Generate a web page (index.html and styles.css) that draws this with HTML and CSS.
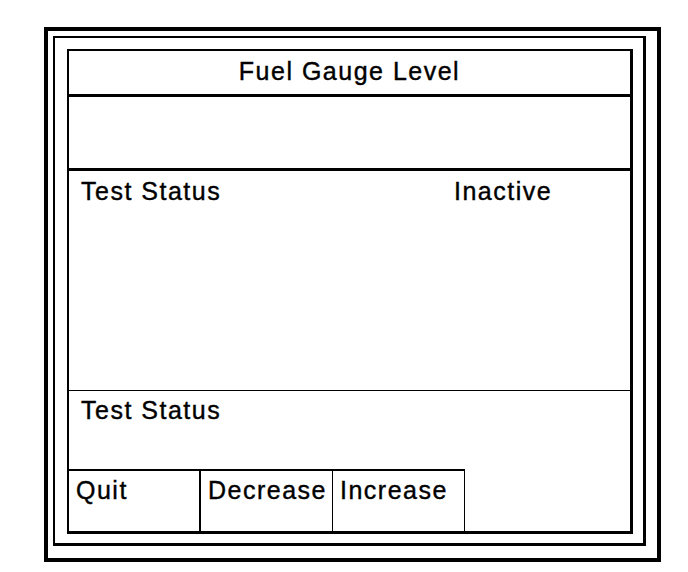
FILE: index.html
```html
<!DOCTYPE html>
<html lang="en">
<head>
    <meta charset="UTF-8">
    <meta name="viewport" content="width=device-width, initial-scale=1.0">
    <title>Fuel Gauge Level</title>
    <link rel="stylesheet" href="styles.css">
</head>
<body>
    <div class="frame">
        <div class="panel">
            <div class="screen">
                <div class="title">Fuel Gauge Level</div>

                <!-- Gauge area (empty) -->
                <div class="gauge"></div>

                <div class="status-row">
                    <span class="status-label">Test Status</span>
                    <span class="status-value">Inactive</span>
                </div>

                <div class="message">Test Status</div>

                <!-- Soft keys -->
                <div class="buttons">
                    <button class="btn btn-quit">Quit</button>
                    <button class="btn">Decrease</button>
                    <button class="btn">Increase</button>
                </div>
            </div>
        </div>
    </div>
</body>
</html>
```

FILE: styles.css
```css
body {
    margin: 0;
    padding: 0;
    background-color: #ffffff;
    color: #000000;
    font-family: "Liberation Sans", Arial, sans-serif;
    font-size: 25px;
    line-height: 24px;
    letter-spacing: 1.5px;
    -webkit-text-stroke: 0.4px #000;
}
.frame {
    box-sizing: border-box;
    width: 617px;
    height: 535px;
    margin: 27px 0 0 44px;
    border: 4px solid #000;
    padding: 5px 11px 12px 5px;
}
.panel {
    box-sizing: border-box;
    height: 100%;
    border: solid #000;
    border-width: 2px 3px 3px 2px;
    padding: 11px 10px 9px 12px;
}
.screen {
    box-sizing: border-box;
    height: 100%;
    border: solid #000;
    border-width: 2px 3px 3px 2px;
    display: flex;
    flex-direction: column;
}
.title {
    height: 35px;
    padding-top: 8px;
    text-align: center;
    border-bottom: 3px solid #000;
    flex: none;
}
.gauge {
    height: 71px;
    border-bottom: 3px solid #000;
    flex: none;
}
.status-row {
    height: 211px;
    padding: 8px 0 0 12px;
    border-bottom: 1px solid #000;
    display: grid;
    grid-template-columns: 373px 1fr;
    align-items: start;
    flex: none;
}
.message {
    height: 71px;
    padding: 7px 0 0 12px;
    flex: none;
}
.buttons {
    flex: 1;
    display: flex;
}
.btn {
    box-sizing: border-box;
    width: 132px;
    margin: 0;
    padding: 7px 0 0 7px;
    border: none;
    border-top: 2px solid #000;
    border-right: 1px solid #000;
    background: #fff;
    color: #000;
    font: inherit;
    letter-spacing: inherit;
    display: flex;
    align-items: flex-start;
}
.btn-quit {
    border-right-width: 2px;
}
```
